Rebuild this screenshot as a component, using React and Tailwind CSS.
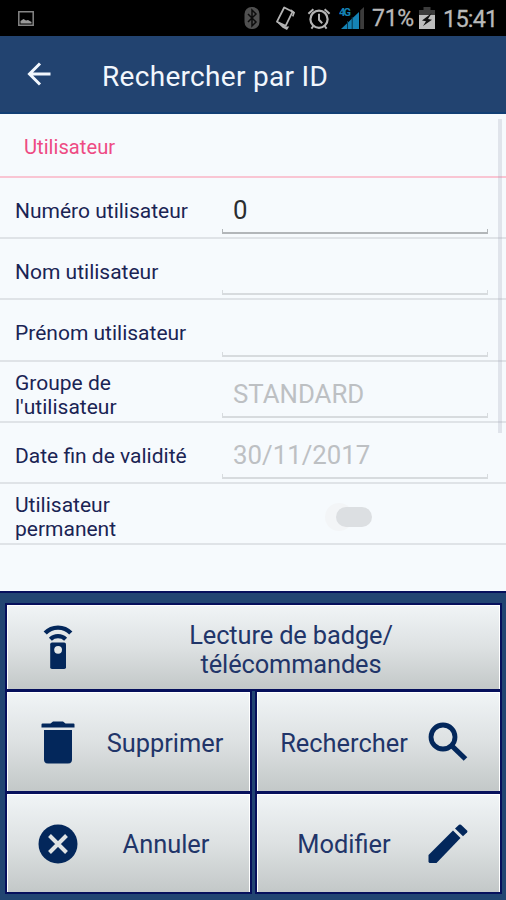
import React from 'react';

const fields = [
  { label: 'Numéro utilisateur', value: '0', active: true },
  { label: 'Nom utilisateur', value: '' },
  { label: 'Prénom utilisateur', value: '' },
  { label: "Groupe de l'utilisateur", value: 'STANDARD', narrow: true },
  { label: 'Date fin de validité', value: '30/11/2017' },
];

function StatusBar() {
  return (
    <div className="h-9 bg-black flex items-center justify-between pl-[18px] pr-[9px] text-[#b9b9b9]">
      <svg width="16" height="15" viewBox="0 0 16 15">
        <path d="M.8.8h14.4v13.4H.8z" fill="none" stroke="#858585" strokeWidth="1.5" />
        <path d="M2.5 12.5V10l3-2 2.5 1.5 2-.5 3.5 2v1.5z" fill="#9a9a9a" />
      </svg>
      <div className="flex items-center">
        {/* Bluetooth */}
        <svg width="16" height="24" viewBox="0 0 16 24" className="mr-[15px]">
          <rect x=".5" y="1" width="15" height="22" rx="7" fill="#505050" />
          <path d="M4 8l8 8-4 4V4l4 4-8 8" fill="none" stroke="#0c0c0c" strokeWidth="1.5" />
        </svg>
        {/* Rotating phone */}
        <svg width="20" height="25" viewBox="0 0 20 25" className="mr-[12px]">
          <path d="M9.2 1.5l8.4 4.2-7 14.2-8.6-4.2z" fill="none" stroke="#b4b4b4" strokeWidth="1.8" strokeLinejoin="round" />
          <path d="M1.2 15.4l9.4 5 3.6 0-2.2 3.6-4.4-2.2z" fill="#b4b4b4" />
          <path d="M15.5 4l3.6 2.6-1.4 3.8" fill="none" stroke="#b4b4b4" strokeWidth="1.6" />
        </svg>
        {/* Alarm */}
        <svg width="24" height="23" viewBox="0 0 24 23" className="mr-[8px]">
          <circle cx="12" cy="12.2" r="8.6" fill="none" stroke="#b4b4b4" strokeWidth="2.2" />
          <path d="M12 6.8v6l3.2 3.4M1.4 6.8l5-4.6M22.6 6.8l-5-4.6M6.4 19l-2 2.6M17.6 19l2 2.6" fill="none" stroke="#b4b4b4" strokeWidth="2" />
        </svg>
        {/* Signal */}
        <svg width="26" height="24" viewBox="0 0 26 24" className="mr-[7px]">
          <path d="M2 23L20 6v17z" fill="#1583b5" />
          <path d="M8.5 15v8M13.2 11v12" stroke="#07394f" strokeWidth="1" />
          <path d="M21.2 4.5L25 1v22h-3.8z" fill="#3c3c3c" />
          <text x="0" y="9.5" fill="#1583b5" fontSize="11" fontWeight="700" fontFamily="Roboto, sans-serif" textLength="12">4G</text>
        </svg>
        <span className="w-[42px] mt-0.5 text-[23px] leading-9 tracking-[-0.3px] whitespace-nowrap [-webkit-text-stroke:0.3px]">71%</span>
        {/* Battery */}
        <svg width="16" height="24" viewBox="0 0 16 24" className="ml-[5px] mr-[8px]">
          <path d="M4.5 1h7v3H16v7H0V4h4.5z" fill="#3c3c3c" />
          <path d="M0 9h16v14H0z" fill="#bdbdbd" />
          <path d="M12.8 7L3 14.5l4 .7L4 20l9-6.3-4-.8z" fill="#111" />
        </svg>
        <span className="w-[54px] mt-0.5 text-[23.5px] leading-9 tracking-[-0.8px] whitespace-nowrap [-webkit-text-stroke:0.3px]">15:41</span>
      </div>
    </div>
  );
}

function Field({ label, value, active, narrow }) {
  return (
    <div className="h-[61.2px] flex border-b-2 border-[#dfe3e7]">
      <div className="w-[222px] pl-[15px] pt-[7px] flex items-center text-[21px] leading-6 text-[#1a2454]">
        <span className={narrow ? 'w-[130px]' : 'w-[200px]'}>{label}</span>
      </div>
      <div className="w-[266px] flex flex-col justify-end pb-[3px]">
        <div className={'pl-[11px] h-8 mb-[3px] text-[25.8px] leading-8 ' + (active ? 'text-[#2b2e31]' : 'text-[#bdc0c3]')}>
          {value}
        </div>
        <div
          className={
            'h-[5px] border-b-2 border-x shrink-0 ' +
            (active ? 'border-[#b2b6b9]' : 'border-[#d7dbde]')
          }
        />
      </div>
    </div>
  );
}

const buttonClass =
  'flex items-center text-[25.4px] text-[#213569] bg-linear-to-b from-[#f0f4f6] via-[#dde1e2] to-[#c3c8c8] border-x border-t border-x-white border-t-white outline-2 outline-[#06105c]';

function RemoteIcon() {
  return (
    <svg width="30" height="46" viewBox="0 0 30 46" className="ml-[35px] shrink-0" fill="none" stroke="#03275b">
      <path d="M2.2 8C9 .8 21 .8 27.8 8" strokeWidth="4.4" />
      <path d="M7.4 14.2C11.5 10.2 18.5 10.2 22.6 14.2" strokeWidth="4.2" />
      <rect x="7.2" y="17.4" width="15.8" height="26.6" rx="1.8" fill="#03275b" stroke="none" />
      <circle cx="15.1" cy="24.8" r="3.9" fill="#e3e7e8" stroke="none" />
    </svg>
  );
}

function App() {
  return (
    <div className="w-[506px] h-[900px] flex flex-col overflow-hidden bg-[#f6fafd] font-[Roboto,sans-serif]">
      <StatusBar />

      {/* App bar */}
      <header className="h-[78px] flex items-center bg-[#224370] border-b-2 border-[#123f74] text-[#f2f7fd]">
        <svg width="26" height="24" viewBox="0 0 26 24" className="ml-[26px]" fill="none" stroke="#f2f7fd" strokeWidth="3">
          <path d="M24.5 12H4M14 1.5L3.5 12 14 22.5" />
        </svg>
        <h1 className="ml-[50px] mt-[5px] text-[28px] leading-8 tracking-[0.3px]">Rechercher par ID</h1>
      </header>

      {/* Form */}
      <main className="relative h-[477px]">
        <div className="h-16 pl-6 pt-[5px] flex items-center border-b-2 border-[#f9c5d3] text-[20.2px] text-[#ee4b83]">
          <span>Utilisateur</span>
        </div>
        {fields.map((field) => (
          <Field key={field.label} {...field} />
        ))}
        <div className="h-[61.2px] flex items-center border-b-2 border-[#dfe3e7]">
          <div className="w-[222px] pl-[15px] pr-[80px] pt-[7px] text-[21px] leading-6 text-[#1a2454]">
            Utilisateur permanent
          </div>
          <div className="ml-[103px] mt-1.5 flex items-center">
            <div className="size-7 rounded-full bg-[#f3f5f7]" />
            <div className="-ml-[17px] w-9 h-5 rounded-full bg-[#dcdfe2] relative" />
          </div>
        </div>
        {/* Scrollbar */}
        <div className="absolute left-[498px] top-[5px] w-1 h-[314px] bg-[#a0a5b8]/25" />
      </main>

      {/* Actions */}
      <footer className="flex-1 bg-[#224572] border-t-2 border-[#06105c] pt-3 pl-[7px] pr-[6px] flex flex-col gap-[3px]">
        <button className={buttonClass + ' h-[84px] w-full'}>
          <RemoteIcon />
          <span className="w-[270px] ml-[83px] mt-1 text-center leading-[29px] tracking-[-0.12px]">Lecture de badge/ télécommandes</span>
        </button>
        <div className="grid grid-cols-2 gap-x-[7px] gap-y-[3px]">
          <button className={buttonClass + ' h-[99px]'}>
            <svg width="34" height="43" viewBox="0 0 34 43" className="ml-[33px] shrink-0" fill="#03275b">
              <path d="M1.500 2.500H9.500L12 .5H22L24.500 2.500H32.500Q33.500 2.500 33.500 3.500V6.500H.5V3.500Q.5 2.500 1.500 2.500Z" />
              <path d="M3 9H31V38.500Q31 42.500 27 42.500H7Q3 42.500 3 38.500Z" />
            </svg>
            <span className="w-[140px] ml-[20px] mt-0.5 text-center">Supprimer</span>
          </button>
          <button className={buttonClass + ' h-[99px]'}>
            <span className="w-[140px] ml-[16px] mt-0.5 text-center">Rechercher</span>
            <svg width="40" height="40" viewBox="0 0 40 40" className="ml-[14px] shrink-0" fill="none" stroke="#03275b">
              <circle cx="15" cy="15" r="12" strokeWidth="4.800" />
              <path d="M23.500 23.500L37.500 37" strokeWidth="5.200" />
            </svg>
          </button>
          <button className={buttonClass + ' h-[98px]'}>
            <svg width="40" height="40" viewBox="0 0 40 40" className="ml-[30px] shrink-0" fill="none">
              <circle cx="20" cy="20" r="19.500" fill="#03275b" />
              <path d="M11.500 11.500l17 17M28.500 11.500l-17 17" stroke="#dfe3e4" strokeWidth="4" />
            </svg>
            <span className="w-[140px] ml-[18px] mt-0.5 text-center">Annuler</span>
          </button>
          <button className={buttonClass + ' h-[98px]'}>
            <span className="w-[140px] ml-[16px] mt-0.5 text-center">Modifier</span>
            <svg width="40" height="40" viewBox="0 0 40 40" className="ml-[14px] shrink-0" fill="#03275b">
              <path d="M.5 31L25 6.500L32.500 14L8.500 39H1.500L.5 38Z" />
              <path d="M27 4.500L31 .8Q32 0 33 .8L39 6.500Q40 7.500 39 8.500L35 12.300Z" />
            </svg>
          </button>
        </div>
      </footer>
    </div>
  );
}

export default App;
